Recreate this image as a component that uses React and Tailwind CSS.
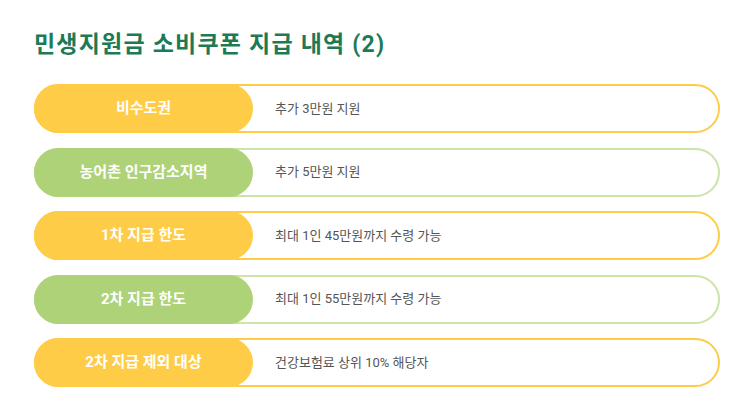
export default function App() {
  const rows = [
    { label: "비수도권", text: "추가 3만원 지원", c: "y" },
    { label: "농어촌 인구감소지역", text: "추가 5만원 지원", c: "g" },
    { label: "1차 지급 한도", text: "최대 1인 45만원까지 수령 가능", c: "y" },
    { label: "2차 지급 한도", text: "최대 1인 55만원까지 수령 가능", c: "g" },
    { label: "2차 지급 제외 대상", text: "건강보험료 상위 10% 해당자", c: "y" },
  ];
  return (
    <div
      className="w-[755px] h-[416px] bg-white pl-[34px] pr-[35px] pt-[30px]"
      style={{ fontFamily: 'Roboto, "Noto Sans CJK KR", sans-serif' }}
    >
      <h1 className="text-[23px] font-bold text-[#1d7a55] leading-[30px] tracking-[1.2px]">
        민생지원금 소비쿠폰 지급 내역 (2)
      </h1>
      <div className="mt-[24px] flex flex-col gap-[14.5px]">
        {rows.map((r, i) => (
          <div
            key={i}
            className={
              "flex items-stretch h-[49px] rounded-full border-2 " +
              (r.c === "y" ? "border-[#ffcc47]" : "border-[#cbe4a8]")
            }
          >
            <div
              className={
                "-my-[2px] -ml-[2px] w-[219px] shrink-0 rounded-full flex items-center justify-center text-white font-bold text-[15px] " +
                (r.c === "y" ? "bg-[#ffcc47]" : "bg-[#aed277]")
              }
            >
              {r.label}
            </div>
            <div className="flex items-center pl-[22px] text-[13px] text-[#555555]">
              {r.text}
            </div>
          </div>
        ))}
      </div>
    </div>
  );
}
